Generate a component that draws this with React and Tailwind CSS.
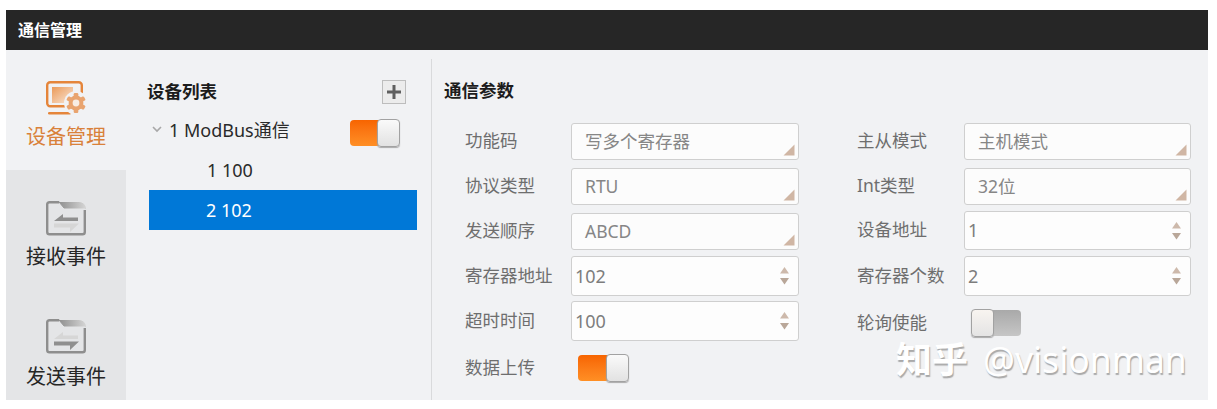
const FONT = "font-['Noto_Sans','Noto_Sans_CJK_SC',sans-serif]";

// 下拉框右下角的小三角
function Corner() {
  return (
    <svg width="12" height="12" viewBox="0 0 12 12" className="absolute right-[3px] bottom-[3px]">
      <path d="M11.5 0.5V11.5H0.5Z" fill="#d0b6a4" />
    </svg>
  );
}

function Spin() {
  return (
    <svg width="9" height="18" viewBox="0 0 9 18" className="absolute right-[9px] top-[10px]">
      <path d="M4.5 0L9 6.5H0Z" fill="#cdb9ab" />
      <path d="M0 11H9L4.5 17.5Z" fill="#b9a799" />
    </svg>
  );
}

function Select({ value, w = 'w-[228px]' }) {
  return (
    <div className={`relative ${w} h-[37px] flex items-center pl-[13px] pb-[1px] bg-[#fcfcfc] border border-[#cfcfcf] rounded-[3px] text-[17.5px] text-[#868686]`}>
      {value}
      <Corner />
    </div>
  );
}

function NumberBox({ value, w = 'w-[228px]', h = 'h-[40px]' }) {
  return (
    <div className={`relative ${w} ${h} flex items-center pl-[3px] bg-[#fdfdfd] border border-[#cfcfcf] rounded-[3px] text-[18px] text-[#7d7d7d]`}>
      {value}
      <Spin />
    </div>
  );
}

function Toggle({ on, w = 'w-[50px]' }) {
  if (on) {
    return (
      <div className={`relative ${w} h-[26px]`}>
        <div className="w-[32px] h-[26px] rounded-[4px] bg-gradient-to-b from-[#f76400] to-[#ff8f24]" />
        <div className="absolute right-0 -top-[1px] w-[23px] h-[28px] rounded-[4px] bg-gradient-to-b from-[#fafafa] to-[#e2e2e2] border border-[#a2a2a2] shadow-[0_1px_1px_#aaa]" />
      </div>
    );
  }
  return (
    <div className={`relative ${w} h-[26px]`}>
      <div className="absolute right-0 top-0 w-[32px] h-[26px] rounded-[4px] bg-gradient-to-b from-[#a9a9a9] to-[#c6c6c6]" />
      <div className="absolute left-0 -top-[1px] w-[23px] h-[28px] rounded-[4px] bg-gradient-to-b from-[#f8f4f0] to-[#e4e4e4] border border-[#a2a2a2] shadow-[0_1px_1px_#aaa]" />
    </div>
  );
}

function Row({ label, labelW, children, className = '' }) {
  return (
    <div className={`flex items-center ${className}`}>
      <span className={`${labelW} shrink-0 text-[17.5px] text-[#6e6e6e] pb-[2px] whitespace-nowrap`}>{label}</span>
      {children}
    </div>
  );
}

function DeviceIcon() {
  return (
    <svg width="41" height="35" viewBox="0 0 41 35">
      <defs>
        <linearGradient id="scr" x1="0" y1="0" x2="1" y2="1">
          <stop offset="0" stopColor="#eb9a58" />
          <stop offset="1" stopColor="#f9e6d6" />
        </linearGradient>
      </defs>
      <rect x="1.2" y="1.2" width="34.6" height="24" rx="3" fill="none" stroke="#e5853a" strokeWidth="2.4" />
      <rect x="6" y="6" width="21" height="16" fill="url(#scr)" />
      <rect x="2" y="31" width="23" height="2.6" rx="1.3" fill="#e5853a" />
      <circle cx="30" cy="22" r="12" fill="#f1f2f4" />
      <g fill="#e9a46f">
        <circle cx="30" cy="22" r="7.4" />
        <rect x="27.7" y="12" width="4.6" height="20" rx="1.2" />
        <rect x="27.7" y="12" width="4.6" height="20" rx="1.2" transform="rotate(60 30 22)" />
        <rect x="27.7" y="12" width="4.6" height="20" rx="1.2" transform="rotate(120 30 22)" />
      </g>
      <circle cx="30" cy="22" r="3.4" fill="#f8ede3" />
    </svg>
  );
}

function FolderIcon({ id, top, bottom, className = '' }) {
  return (
    <svg width="40" height="35" viewBox="0 0 40 35" className={className}>
      <defs>
        <linearGradient id={id} x1="0" y1="0" x2="1" y2="0">
          <stop offset="0" stopColor="#8f8f8f" />
          <stop offset="1" stopColor="#d4d4d4" />
        </linearGradient>
      </defs>
      <path d="M13 1.2H3.5Q1.2 1.2 1.2 3.5V31Q1.2 33.3 3.5 33.3H36.5Q38.8 33.3 38.8 31V9" fill="none" stroke="#8e8e8e" strokeWidth="2.4" />
      <path d="M13 1L18 7H39.5V8Q39.5 2 33 1.5H14Z" fill={`url(#${id})`} stroke={`url(#${id})`} />
      <path d="M8 20L17 13V16.5H32V20Z" fill={top} />
      <path d="M8 22.5H33L24 31V26.5H8Z" fill={bottom} />
    </svg>
  );
}

function NavItem({ icon, label, active }) {
  return (
    <div className={`h-[120px] shrink-0 flex flex-col items-center pt-[30px] ${active ? 'bg-[#f1f2f4]' : ''}`}>
      <div className="h-[36px] flex items-end">{icon}</div>
      <span className={`mt-[6px] text-[20px] leading-[30px] ${active ? 'text-[#d9813a]' : 'text-[#262626]'}`}>{label}</span>
    </div>
  );
}

export default function App() {
  return (
    <div className={`${FONT} w-[1217px] h-[409px] bg-white pt-[10px] pl-[6px] overflow-hidden`}>
      <div className="relative w-[1202px] h-[390px] flex flex-col bg-[#f1f2f4]">
        <div className="h-[40px] shrink-0 flex items-center pl-[12px] bg-[#262626] text-[16px] font-bold text-white">通信管理</div>

        <div className="flex flex-1 min-h-0">
          {/* 左侧导航 */}
          <div className="w-[120px] shrink-0 flex flex-col overflow-hidden bg-[#e4e5e7]">
            <NavItem active icon={<DeviceIcon />} label="设备管理" />
            <NavItem icon={<FolderIcon id="f1" top="#8f8f8f" bottom="#d6d6d6" />} label="接收事件" />
            <NavItem icon={<FolderIcon id="f2" top="#d6d6d6" bottom="#8f8f8f" className="-translate-y-[2px]" />} label="发送事件" />
          </div>

          {/* 设备列表 */}
          <div className="w-[305px] shrink-0 pl-[21px] pr-[14px] pt-[28px]">
            <div className="h-[32px] flex items-start justify-between pr-[11px]">
              <span className="mt-[1px] text-[17.5px] leading-[24px] font-bold text-[#1c1c1c]">设备列表</span>
              <div className="w-[24px] h-[24px] mt-[2px] flex items-center justify-center bg-[#ececec] border border-[#bdbdbd]">
                <svg width="14" height="14" viewBox="0 0 14 14">
                  <path d="M5.5 0H8.5V5.5H14V8.5H8.5V14H5.5V8.5H0V5.5H5.5Z" fill="#5f5f5f" />
                </svg>
              </div>
            </div>
            <div className="h-[40px] flex items-center text-[18px] text-[#2a2a2a]">
              <svg width="10" height="7" viewBox="0 0 10 7" className="ml-[5px] mr-[7px] -mt-[1px]">
                <path d="M1 1L5 5L9 1" fill="none" stroke="#a8a8a8" strokeWidth="1.6" />
              </svg>
              <span className="mt-[1px]">1 ModBus通信</span>
              <div className="ml-auto mr-[17px] mt-[5px]"><Toggle on /></div>
            </div>
            <div className="h-[40px] flex items-center pl-[60px] text-[18px] text-[#2a2a2a]">1 100</div>
            <div className="h-[40px] ml-[2px] flex items-center pl-[57px] bg-[#0078d7] text-[18px] text-white">2 102</div>
          </div>

          {/* 通信参数 */}
          <div className="flex-1 mt-[9px] border-l border-[#d9dadc] pl-[12px] pt-[16px]">
            <div className="text-[17.5px] leading-[30px] font-bold text-[#1c1c1c]">通信参数</div>
            <div className="flex mt-[18px] pl-[21px]">
              <div className="w-[392px] flex flex-col">
                <Row label="功能码" labelW="w-[106px]"><Select value="写多个寄存器" /></Row>
                <Row label="协议类型" labelW="w-[106px]" className="mt-[8px]"><Select value="RTU" /></Row>
                <Row label="发送顺序" labelW="w-[106px]" className="mt-[8px]"><Select value="ABCD" /></Row>
                <Row label="寄存器地址" labelW="w-[106px]" className="mt-[6px]"><NumberBox value="102" /></Row>
                <Row label="超时时间" labelW="w-[106px]" className="mt-[5px]"><NumberBox value="100" /></Row>
                <Row label="数据上传" labelW="w-[113px]" className="mt-[13px]"><Toggle on w="w-[51px]" /></Row>
              </div>
              <div className="flex flex-col">
                <Row label="主从模式" labelW="w-[107px]"><Select value="主机模式" w="w-[227px]" /></Row>
                <Row label="Int类型" labelW="w-[107px]" className="mt-[8px]"><Select value="32位" w="w-[227px]" /></Row>
                <Row label="设备地址" labelW="w-[107px]" className="mt-[6px]"><NumberBox value="1" w="w-[227px]" h="h-[39px]" /></Row>
                <Row label="寄存器个数" labelW="w-[107px]" className="mt-[6px]"><NumberBox value="2" w="w-[227px]" /></Row>
                <Row label="轮询使能" labelW="w-[114px]" className="mt-[13px]"><Toggle /></Row>
              </div>
            </div>
          </div>
        </div>

        {/* 水印 */}
        <div className="absolute left-[890px] top-[327px] text-[35.5px] leading-[44px] text-white whitespace-nowrap [text-shadow:1px_2px_1px_#a9a9a9]">
          <span className="text-[36px] font-bold mr-[15px]">知乎</span>@visionman
        </div>
      </div>
    </div>
  );
}
